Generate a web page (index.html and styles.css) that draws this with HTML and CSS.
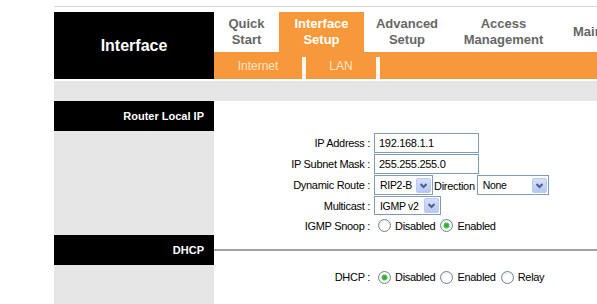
FILE: index.html
```html
<!DOCTYPE html>
<html lang="en">
<head>
    <meta charset="UTF-8">
    <title>Interface Setup - LAN</title>
    <link rel="stylesheet" href="styles.css">
</head>
<body>
    <div class="page">
        <div class="top_line"></div>

        <div class="header">
            <div class="side_title">Interface</div>
            <div class="nav">
                <div class="tabs">
                    <div class="tab tab_quick">Quick<br>Start</div>
                    <div class="tab tab_interface active">Interface<br>Setup</div>
                    <div class="tab tab_advanced">Advanced<br>Setup</div>
                    <div class="tab tab_access">Access<br>Management</div>
                    <div class="tab tab_maint">Maintenance</div>
                </div>
                <div class="subnav">
                    <span class="sub sub_internet">Internet</span>
                    <span class="sep"></span>
                    <span class="sub sub_lan">LAN</span>
                    <span class="sep"></span>
                </div>
            </div>
        </div>

        <div class="band"></div>

        <div class="section">
            <div class="side">
                <div class="side_head">Router Local IP</div>
            </div>
            <div class="main main_ip">
                <div class="row">
                    <label class="label">IP Address :</label>
                    <input class="text_box" type="text" value="192.168.1.1">
                </div>
                <div class="row">
                    <label class="label">IP Subnet Mask :</label>
                    <input class="text_box" type="text" value="255.255.255.0">
                </div>
                <div class="row">
                    <label class="label">Dynamic Route :</label>
                    <span class="select sel_route">
                        <select>
                            <option>RIP2-B</option>
                            <option>RIP1</option>
                            <option>RIP2-M</option>
                        </select>
                        <span class="arrow"><svg width="13" height="13" viewBox="0 0 13 13"><polyline points="3.5,5 6.5,8 9.5,5" fill="none" stroke="#4d6185" stroke-width="2"/></svg></span>
                    </span>
                    <span class="inline_text">Direction</span>
                    <span class="select sel_dir">
                        <select>
                            <option>None</option>
                            <option>Both</option>
                            <option>IN only</option>
                            <option>OUT only</option>
                        </select>
                        <span class="arrow"><svg width="13" height="13" viewBox="0 0 13 13"><polyline points="3.5,5 6.5,8 9.5,5" fill="none" stroke="#4d6185" stroke-width="2"/></svg></span>
                    </span>
                </div>
                <div class="row">
                    <label class="label">Multicast :</label>
                    <span class="select sel_multi">
                        <select>
                            <option>IGMP v2</option>
                            <option>IGMP v1</option>
                            <option>Disabled</option>
                        </select>
                        <span class="arrow"><svg width="13" height="13" viewBox="0 0 13 13"><polyline points="3.5,5 6.5,8 9.5,5" fill="none" stroke="#4d6185" stroke-width="2"/></svg></span>
                    </span>
                </div>
                <div class="row">
                    <label class="label">IGMP Snoop :</label>
                    <input class="radio" type="radio" name="snoop">
                    <span class="radio_text">Disabled</span>
                    <input class="radio" type="radio" name="snoop" checked>
                    <span class="radio_text">Enabled</span>
                </div>
            </div>
        </div>

        <div class="section section_last">
            <div class="side">
                <div class="side_head">DHCP</div>
            </div>
            <div class="main main_dhcp">
                <div class="rule"></div>
                <div class="row row_dhcp">
                    <label class="label">DHCP :</label>
                    <input class="radio" type="radio" name="dhcp" checked>
                    <span class="radio_text">Disabled</span>
                    <input class="radio" type="radio" name="dhcp">
                    <span class="radio_text">Enabled</span>
                    <input class="radio" type="radio" name="dhcp">
                    <span class="radio_text">Relay</span>
                </div>
            </div>
        </div>
    </div>
</body>
</html>
```

FILE: styles.css
```css
*, *:after, *:before {
    box-sizing: border-box;
}

body {
    margin: 0;
    background: white;
    font-family: "Liberation Sans", Arial, sans-serif;
    font-size: 11px;
    color: black;
}

.page {
    margin-left: 54px;
    width: 543px;
    overflow: hidden;
}

.top_line {
    margin-top: 6px;
    height: 1px;
    background: #d6d6d6;
}

/* header */

.header {
    display: flex;
    margin-top: 5px;
    height: 67px;
}

.side_title {
    width: 160px;
    flex-shrink: 0;
    background: black;
    color: white;
    font-size: 16px;
    font-weight: 700;
    display: flex;
    align-items: center;
    justify-content: center;
}

.nav {
    flex: 1;
    min-width: 0;
    display: flex;
    flex-direction: column;
    overflow: hidden;
}

.tabs {
    display: flex;
    height: 40px;
}

.tab {
    flex-shrink: 0;
    display: flex;
    align-items: center;
    justify-content: center;
    text-align: center;
    font-size: 13px;
    line-height: 16px;
    font-weight: 700;
    color: #666;
    background: white;
}

.tab.active {
    background: #f7993b;
    color: white;
}

.tab_quick { width: 65px; }
.tab_interface { width: 85px; }
.tab_advanced { width: 86px; }
.tab_access { width: 107px; }
.tab_maint {
    justify-content: flex-start;
    padding-left: 16px;
    width: 120px;
}

.subnav {
    display: flex;
    align-items: flex-end;
    height: 27px;
    background: #f7993b;
}

.sub {
    align-self: center;
    text-align: center;
    font-size: 12px;
    color: #fde5c8;
}

.sub_internet { width: 88px; }
.sub_lan { width: 70px; }

.sep {
    width: 4px;
    height: 22px;
    background: #fff8ee;
}

.band {
    margin-top: 2px;
    height: 20px;
    background: #e6e6e6;
}

/* sections */

.section {
    display: flex;
}

.section_last {
    height: 80px;
}

.side {
    width: 160px;
    flex-shrink: 0;
    background: #e6e6e6;
}

.side_head {
    height: 30px;
    background: black;
    color: white;
    font-weight: 700;
    font-size: 11px;
    text-align: right;
    padding-right: 10px;
    line-height: 30px;
}

.main {
    flex: 1;
}

.main_ip {
    padding-top: 31px;
}

.row {
    display: flex;
    align-items: center;
    height: 21px;
    letter-spacing: -0.3px;
}

.main_ip .row:last-child {
    height: 19px;
}

.label {
    width: 160px;
    flex-shrink: 0;
    padding-right: 4px;
    text-align: right;
}

.text_box {
    width: 105px;
    height: 20px;
    border: 1px solid #7f9db9;
    padding: 0 4px;
    font-family: "Liberation Sans", Arial, sans-serif;
    font-size: 11px;
    letter-spacing: -0.3px;
    color: black;
    outline: none;
}

.select {
    position: relative;
    display: inline-block;
    height: 20px;
    border: 1px solid #7f9db9;
    background: white;
}

.select select {
    appearance: none;
    -webkit-appearance: none;
    border: 0;
    background: transparent;
    width: 100%;
    height: 100%;
    padding: 0 0 0 5px;
    font-family: "Liberation Sans", Arial, sans-serif;
    font-size: 10.5px;
    letter-spacing: -0.3px;
    color: black;
    outline: none;
}

.select .arrow {
    position: absolute;
    right: 1px;
    top: 2px;
    width: 15px;
    height: 15px;
    border: 1px solid #b7c9f4;
    border-radius: 2px;
    background: linear-gradient(#d7e1fb, #b5c7f4);
    display: flex;
    align-items: center;
    justify-content: center;
}

.sel_route { width: 59px; }
.sel_dir { width: 72px; }
.sel_multi {
    width: 67px;
    height: 19px;
}
.sel_multi .arrow {
    top: 1px;
}

.inline_text {
    margin: 2px 2px 0 1px;
}

.radio {
    appearance: none;
    -webkit-appearance: none;
    width: 13px;
    height: 13px;
    margin: 0 4px 0 4px;
    border: 1px solid #6f8594;
    border-radius: 50%;
    background: radial-gradient(circle at 60% 60%, #ffffff 30%, #e4e4dc 100%);
}

.radio:checked {
    background: radial-gradient(circle, #28a428 0, #4cc24c 2.5px, #ffffff 3.5px, #e4e4dc 100%);
}

.radio_text {
    margin-right: 1px;
}

/* dhcp */

.rule {
    margin-top: 14px;
    height: 2px;
    background: #a3a3a3;
}

.row_dhcp {
    margin-top: 14px;
    height: 24px;
}
```
